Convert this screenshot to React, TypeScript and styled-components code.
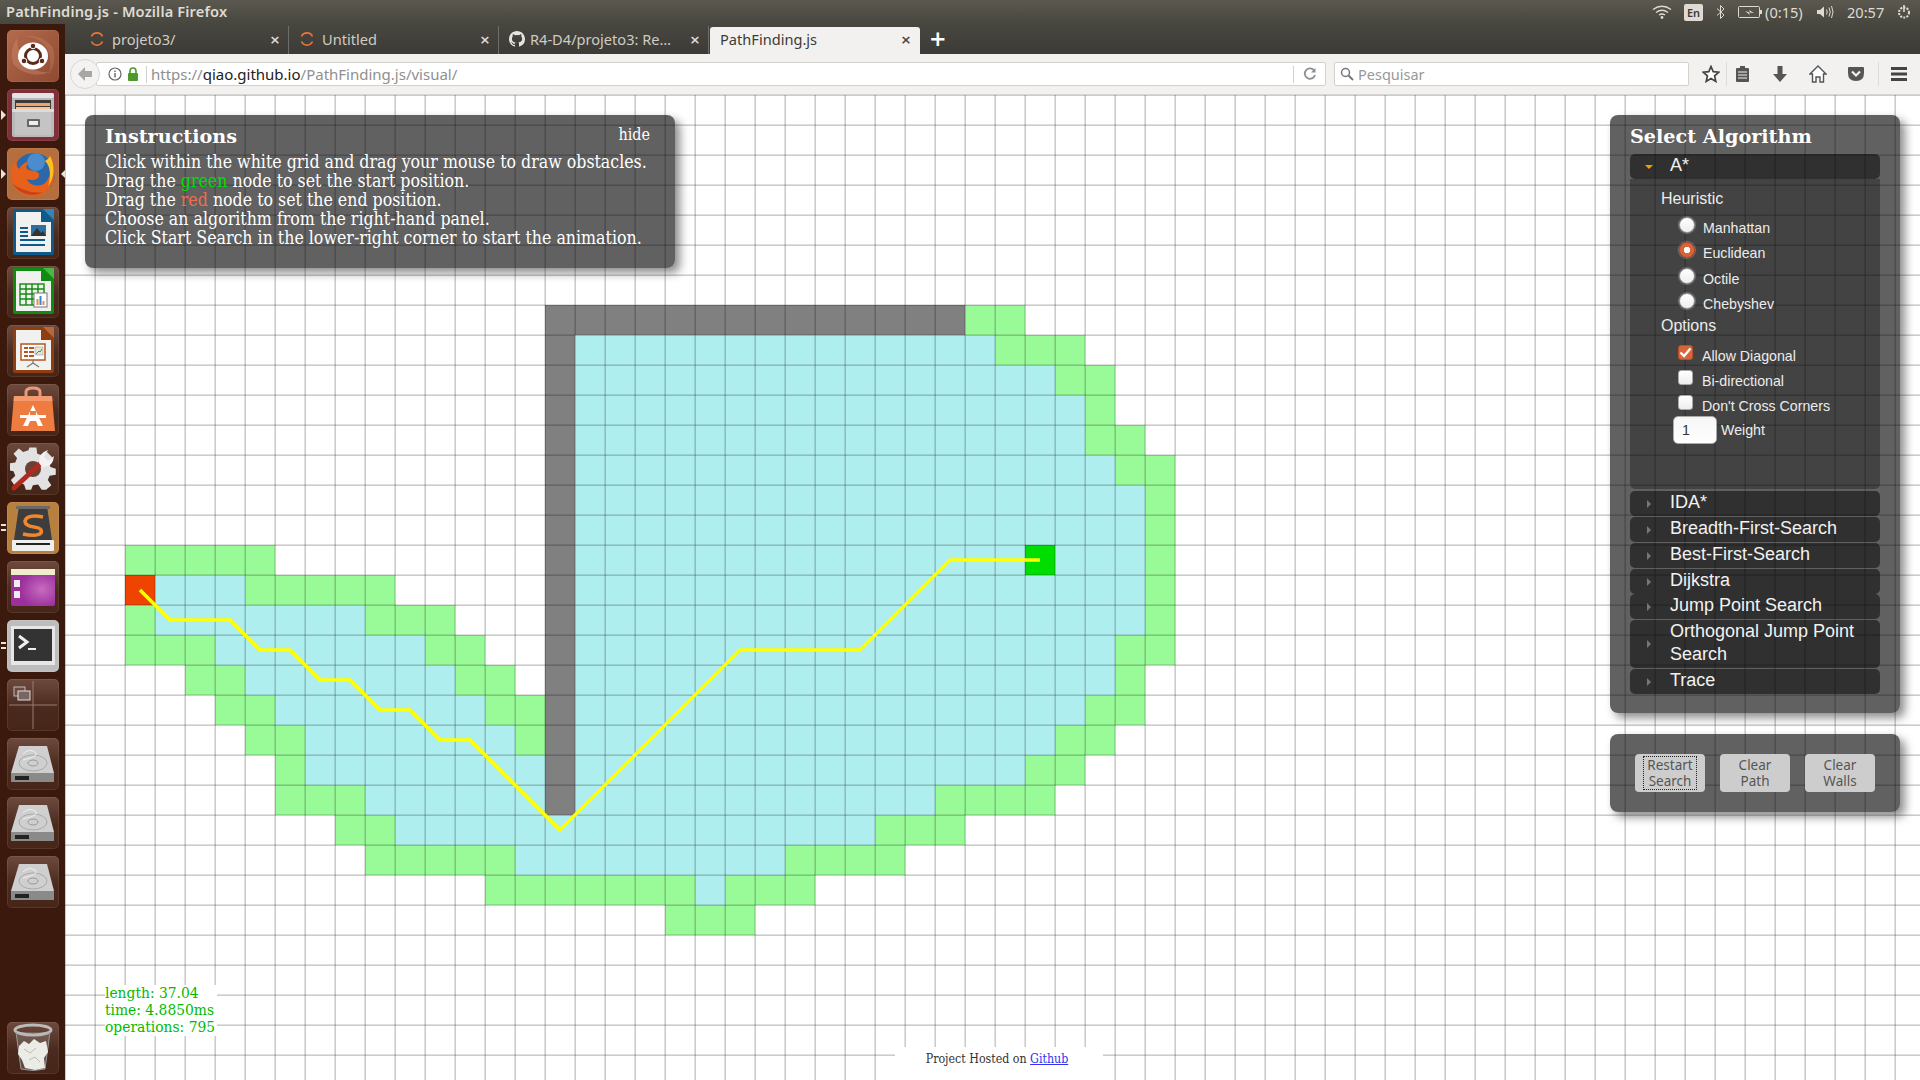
import React from "react";
import styled, { createGlobalStyle } from "styled-components";

const CELL = 30;
const COLS = 62;
const ROWS = 33;

type Run = [number, number, "open" | "closed" | "wall"];

// one entry per grid row: [first col, last col, kind]
const RUNS: Record<number, Run[]> = {
  7: [[16, 29, "wall"], [30, 31, "open"]],
  8: [[16, 16, "wall"], [17, 30, "closed"], [31, 33, "open"]],
  9: [[16, 16, "wall"], [17, 32, "closed"], [33, 34, "open"]],
  10: [[16, 16, "wall"], [17, 33, "closed"], [34, 34, "open"]],
  11: [[16, 16, "wall"], [17, 33, "closed"], [34, 35, "open"]],
  12: [[16, 16, "wall"], [17, 34, "closed"], [35, 36, "open"]],
  13: [[16, 16, "wall"], [17, 35, "closed"], [36, 36, "open"]],
  14: [[16, 16, "wall"], [17, 35, "closed"], [36, 36, "open"]],
  15: [[2, 6, "open"], [16, 16, "wall"], [17, 35, "closed"], [36, 36, "open"]],
  16: [[3, 5, "closed"], [6, 10, "open"], [16, 16, "wall"], [17, 35, "closed"], [36, 36, "open"]],
  17: [[2, 2, "open"], [3, 9, "closed"], [10, 12, "open"], [16, 16, "wall"], [17, 35, "closed"], [36, 36, "open"]],
  18: [[2, 4, "open"], [5, 11, "closed"], [12, 13, "open"], [16, 16, "wall"], [17, 34, "closed"], [35, 36, "open"]],
  19: [[4, 5, "open"], [6, 12, "closed"], [13, 14, "open"], [16, 16, "wall"], [17, 34, "closed"], [35, 35, "open"]],
  20: [[5, 6, "open"], [7, 13, "closed"], [14, 15, "open"], [16, 16, "wall"], [17, 33, "closed"], [34, 35, "open"]],
  21: [[6, 7, "open"], [8, 14, "closed"], [15, 15, "open"], [16, 16, "wall"], [17, 32, "closed"], [33, 34, "open"]],
  22: [[7, 7, "open"], [8, 15, "closed"], [16, 16, "wall"], [17, 31, "closed"], [32, 33, "open"]],
  23: [[7, 9, "open"], [10, 15, "closed"], [16, 16, "wall"], [17, 28, "closed"], [29, 32, "open"]],
  24: [[9, 10, "open"], [11, 26, "closed"], [27, 29, "open"]],
  25: [[10, 14, "open"], [15, 23, "closed"], [24, 27, "open"]],
  26: [[14, 20, "open"], [21, 21, "closed"], [22, 24, "open"]],
  27: [[20, 22, "open"]],
};

const FILL = { open: "#98fb98", closed: "#afeeee", wall: "#808080" };

const PATH = [
  [2, 16], [3, 17], [5, 17], [6, 18], [7, 18], [8, 19], [9, 19], [10, 20], [11, 20],
  [12, 21], [13, 21], [16, 24], [22, 18], [26, 18], [29, 15], [32, 15],
];

const DARK_TILE = "linear-gradient(#6e4a3d, #4a2a1e 55%, #472619)";

const GlobalStyle = createGlobalStyle`
  html, body {
    margin: 0;
    padding: 0;
    overflow: hidden;
    background: #fff;
  }
`;

const Screen = styled.div`
  width: 1920px;
  height: 1080px;
  display: flex;
  flex-direction: column;
  overflow: hidden;
`;

const TitleBar = styled.div`
  height: 24px;
  flex: none;
  display: flex;
  align-items: center;
  padding: 0 8px 0 6px;
  background: linear-gradient(#5b594f, #47463f);
  color: #dfdbd2;
  font: 500 14.6px "Noto Sans", sans-serif;
`;

const WindowTitle = styled.div`
  font-weight: 600;
  letter-spacing: 0.15px;
  margin-right: auto;
  padding-bottom: 2px;
`;

const TrayText = styled.span<{ $ml: number; $w: number }>`
  margin-left: ${({ $ml }) => $ml}px;
  width: ${({ $w }) => $w}px;
  flex: none;
  white-space: nowrap;
  font-size: 14.6px;
  color: #dfdbd2;
  font-weight: 400;
`;

const TrayIcon = styled.svg<{ $ml: number }>`
  margin-left: ${({ $ml }) => $ml}px;
  flex: none;
  display: block;
`;

const LangBox = styled.span`
  margin-left: 12px;
  width: 19px;
  height: 17px;
  flex: none;
  border-radius: 2px;
  background: #dfdbd2;
  color: #3c3b37;
  font-size: 11px;
  font-weight: 600;
  display: flex;
  align-items: center;
  justify-content: center;
`;

const Body = styled.div`
  flex: 1;
  display: flex;
  min-height: 0;
`;

const Launcher = styled.div`
  width: 65px;
  flex: none;
  display: flex;
  flex-direction: column;
  gap: 7px;
  padding: 6px 0;
  box-sizing: border-box;
  background: #3c190d;
  align-items: center;
`;

const Tile = styled.div<{ $bg: string; $bottom?: boolean }>`
  position: relative;
  width: 52px;
  height: 52px;
  flex: none;
  border-radius: 5px;
  background: ${({ $bg }) => $bg};
  box-shadow: inset 0 0 0 1px rgba(255, 255, 255, 0.08);
  ${({ $bottom }) => ($bottom ? "margin-top: auto;" : "")}

  svg {
    display: block;
  }
`;

const Pip = styled.span<{ $side: "left" | "right" }>`
  position: absolute;
  top: 21px;
  ${({ $side }) => ($side === "left" ? "left: -6px;" : "right: -7px;")}
  width: 0;
  height: 0;
  border-top: 5px solid transparent;
  border-bottom: 5px solid transparent;
  ${({ $side }) =>
    $side === "left" ? "border-left: 5px solid #e8e4dc;" : "border-right: 5px solid #e8e4dc;"}
`;

const DoublePip = styled.span`
  position: absolute;
  left: -6px;
  top: 22px;
  width: 5px;
  height: 2px;
  background: #e8e4dc;
  box-shadow: 0 5px 0 #e8e4dc;
`;

const Browser = styled.div`
  flex: 1;
  min-width: 0;
  display: flex;
  flex-direction: column;
`;

const TabStrip = styled.div`
  height: 30px;
  flex: none;
  display: flex;
  align-items: flex-end;
  padding-left: 14px;
  background: linear-gradient(#47463f, #3c3b37);
  font: 14.6px "Noto Sans", sans-serif;
`;

const Tab = styled.div<{ $active?: boolean }>`
  width: 210px;
  height: ${({ $active }) => ($active ? "27px" : "28px")};
  box-sizing: border-box;
  display: flex;
  align-items: center;
  padding: 0 ${({ $active }) => ($active ? "8px 3px" : "7px 2px")} 10px;
  margin-left: ${({ $active }) => ($active ? "1px" : "0")};
  color: ${({ $active }) => ($active ? "#3c3b37" : "#cfccc4")};
  background: ${({ $active }) => ($active ? "#f2f1f0" : "transparent")};
  border-radius: ${({ $active }) => ($active ? "3px 3px 0 0" : "0")};
  border-right: ${({ $active }) => ($active ? "0" : "1px solid #6e6d68")};
`;

const TabLabel = styled.span<{ $gap: number }>`
  margin-left: ${({ $gap }) => $gap}px;
  flex: 1;
  white-space: nowrap;
`;

const TabClose = styled.span<{ $dark?: boolean }>`
  font: 700 13px "DejaVu Sans", sans-serif;
  color: ${({ $dark }) => ($dark ? "#444" : "#ddd")};
  width: 12px;
  text-align: center;
`;

const NewTab = styled.span`
  margin-left: 9px;
  align-self: center;
  color: #fff;
  font: 700 21px "DejaVu Sans", sans-serif;
  line-height: 1;
`;

const Toolbar = styled.div`
  height: 41px;
  flex: none;
  box-sizing: border-box;
  display: flex;
  align-items: center;
  padding-left: 5px;
  background: #f2f1f0;
  border-bottom: 1px solid #d6d5d3;
`;

const BackButton = styled.div`
  position: relative;
  z-index: 1;
  width: 30px;
  height: 30px;
  flex: none;
  box-sizing: border-box;
  margin-right: -4px;
  border-radius: 50%;
  border: 1px solid #d8d7d5;
  background: #f4f3f2;
  display: flex;
  align-items: center;
  justify-content: center;
`;

const UrlBox = styled.div`
  width: 1230px;
  height: 24px;
  flex: none;
  box-sizing: border-box;
  display: flex;
  align-items: center;
  padding-left: 10px;
  background: #fff;
  border: 1px solid #d2d1ce;
  border-radius: 2px;
  font: 15px "Noto Sans", sans-serif;
  color: #8f8f8f;
`;

const UrlDivider = styled.span`
  width: 1px;
  height: 17px;
  margin: 0 4px 0 6px;
  background: #d2d1ce;
`;

const UrlHost = styled.span`
  color: #222;
`;

const ReloadSlot = styled.div`
  margin-left: auto;
  width: 31px;
  height: 17px;
  border-left: 1px solid #d2d1ce;
  display: flex;
  align-items: center;
  justify-content: center;
`;

const SearchBox = styled(UrlBox)`
  width: 355px;
  margin-left: 8px;
  padding-left: 5px;
  gap: 4px;
  font-size: 14.5px;
  color: #999;
`;

const ToolSlot = styled.div<{ $w: number; $rule?: boolean; $ml?: number }>`
  width: ${({ $w }) => $w}px;
  height: 24px;
  flex: none;
  margin-left: ${({ $ml }) => $ml ?? 0}px;
  display: flex;
  align-items: center;
  justify-content: center;
  box-sizing: border-box;
  border-right: ${({ $rule }) => ($rule ? "1px solid #dcdbd9" : "0")};
`;

const LockIcon = styled.svg`
  margin-left: 3px;
`;

const Viewport = styled.div`
  position: relative;
  flex: 1;
  min-height: 0;
  overflow: hidden;
  background: #fff;
`;

const Canvas = styled.svg`
  display: block;
`;

const Panel = styled.div`
  background: rgba(0, 0, 0, 0.62);
  border-radius: 8px;
  box-shadow: 5px 5px 10px rgba(0, 0, 0, 0.45);
  color: #fff;
`;

const InstructionsPanel = styled(Panel)`
  position: absolute;
  left: 20px;
  top: 20px;
  width: 590px;
  height: 153px;
  box-sizing: border-box;
  padding: 9px 20px;
  font: 17.6px "DejaVu Serif Condensed", "DejaVu Serif", serif;
  font-stretch: condensed;
  line-height: 19px;
`;

const PanelHeading = styled.div`
  font: 700 19.2px "DejaVu Serif", serif;
  line-height: 26px;
`;

const InstructionsBody = styled.div`
  margin-top: 3px;
`;

const HideLink = styled.span`
  position: absolute;
  right: 25px;
  top: 10px;
  font-size: 16px;
`;

const Hint = styled.span<{ $color: string }>`
  color: ${({ $color }) => $color};
`;

const SideStack = styled.div`
  position: absolute;
  right: 20px;
  top: 20px;
  width: 290px;
  display: flex;
  flex-direction: column;
  gap: 21px;
`;

const AlgorithmPanel = styled(Panel)`
  height: 598px;
  box-sizing: border-box;
  padding: 9px 20px 0;
  font-family: "Liberation Sans", sans-serif;

  ${PanelHeading} {
    height: 30px;
  }
`;

const AccordionHead = styled.div<{ $tight?: boolean }>`
  min-height: 25px;
  box-sizing: border-box;
  display: flex;
  align-items: center;
  margin-bottom: ${({ $tight }) => ($tight ? "0" : "1px")};
  padding: 0 0 2px 40px;
  position: relative;
  background: rgba(0, 0, 0, 0.5);
  border-radius: 5px;
  font-size: 18px;
  line-height: 23px;
  color: #f2f2f2;
`;

const Caret = styled.span<{ $open?: boolean }>`
  position: absolute;
  top: 50%;
  ${({ $open }) =>
    $open
      ? `left: 15px;
         margin-top: -2px;
         border-left: 4px solid transparent;
         border-right: 4px solid transparent;
         border-top: 4px solid #f90;`
      : `left: 17px;
         margin-top: -4px;
         border-top: 4px solid transparent;
         border-bottom: 4px solid transparent;
         border-left: 4px solid #777;`}
  width: 0;
  height: 0;
`;

const AccordionBody = styled.div`
  height: 310px;
  box-sizing: border-box;
  margin: -1px 0 2px;
  padding-top: 8px;
  background: rgba(0, 0, 0, 0.3);
  border-radius: 0 0 5px 5px;
  font-size: 14.2px;
  color: #ececec;
`;

const GroupLabel = styled.div<{ $h: number }>`
  height: ${({ $h }) => $h}px;
  line-height: ${({ $h }) => $h}px;
  padding-left: 31px;
  font-size: 16px;
`;

const OptionRow = styled.div<{ $h: number; $indent: number; $gap: number }>`
  height: ${({ $h }) => $h}px;
  padding-left: ${({ $indent }) => $indent}px;
  display: flex;
  align-items: center;
  gap: ${({ $gap }) => $gap}px;
`;

const OptionText = styled.span<{ $drop: number }>`
  margin-top: ${({ $drop }) => $drop}px;
`;

const Radio = styled.span<{ $on?: boolean }>`
  width: 16px;
  height: 16px;
  box-sizing: border-box;
  border-radius: 50%;
  border: 1px solid ${({ $on }) => ($on ? "#b8502a" : "#9a9a9a")};
  background: ${({ $on }) =>
    $on
      ? "radial-gradient(circle, #fff 0 3px, #d8653a 3.5px)"
      : "linear-gradient(#fff, #eee)"};
  box-shadow: 0 0 1px 1px rgba(255, 255, 255, 0.25);
`;

const Check = styled.span<{ $on?: boolean }>`
  width: 15px;
  height: 15px;
  box-sizing: border-box;
  border-radius: 3px;
  border: 1px solid ${({ $on }) => ($on ? "#b8502a" : "#aaa")};
  background: ${({ $on }) => ($on ? "#d8653a" : "linear-gradient(#fff, #eee)")};
  display: flex;
  align-items: center;
  justify-content: center;
`;

const SectionGap = styled.div<{ $h: number }>`
  height: ${({ $h }) => $h}px;
`;

const WeightRow = styled.div`
  margin-top: 1px;
  height: 28px;
  padding-left: 43px;
  display: flex;
  align-items: center;
  gap: 4px;
`;

const WeightInput = styled.div`
  width: 44px;
  height: 28px;
  box-sizing: border-box;
  border-radius: 5px;
  border: 1px solid #aaa;
  background: linear-gradient(#f6f6f6, #fff);
  color: #333;
  padding-left: 8px;
  line-height: 26px;
`;

const ActionsPanel = styled(Panel)`
  height: 78px;
  box-sizing: border-box;
  padding: 20px 25px;
  display: flex;
  gap: 15px;
`;

const ActionButton = styled.div<{ $focus?: boolean }>`
  position: relative;
  width: 70px;
  height: 38px;
  border-radius: 4px;
  background: #cdcdcd;
  color: #555;
  font: 13.5px/16px "Noto Sans", sans-serif;
  text-align: center;
  display: flex;
  align-items: center;
  justify-content: center;

  ${({ $focus }) =>
    $focus
      ? `&::after {
           content: "";
           position: absolute;
           left: 8px;
           right: 8px;
           top: 2px;
           bottom: 2px;
           border: 1px dotted #222;
         }`
      : ""}
`;

const Stats = styled.div`
  position: absolute;
  left: 40px;
  bottom: 44px;
  padding-right: 2px;
  background: #fff;
  color: #00bb00;
  font: 15.4px/17px "DejaVu Serif Condensed", "DejaVu Serif", serif;
  font-stretch: condensed;
`;

const Footer = styled.div`
  position: absolute;
  left: 830px;
  bottom: 0;
  width: 208px;
  height: 33px;
  box-sizing: border-box;
  padding: 1px 4px 0 0;
  background: #fff;
  color: #333;
  text-align: center;
  font: 12.3px/22px "DejaVu Serif Condensed", "DejaVu Serif", serif;
  font-stretch: condensed;
`;

const FooterLink = styled.span`
  color: #3333ee;
  text-decoration: underline;
`;

const GridCanvas = () => {
  const cx = (c: number) => c * CELL + 15;
  return (
    <Canvas width={COLS * CELL} height={ROWS * CELL} shapeRendering="crispEdges">
      {Object.entries(RUNS).flatMap(([row, runs]) =>
        runs.map(([from, to, kind]) => (
          <rect
            key={`${row}-${from}`}
            x={from * CELL}
            y={Number(row) * CELL}
            width={(to - from + 1) * CELL}
            height={CELL}
            fill={FILL[kind]}
          />
        )),
      )}
      <rect x={2 * CELL} y={16 * CELL} width={CELL} height={CELL} fill="#ee4400" />
      <rect x={32 * CELL} y={15 * CELL} width={CELL} height={CELL} fill="#00dd00" />
      {Array.from({ length: COLS }, (_, i) => (
        <g key={`v${i}`}>
          <rect x={i * CELL - 1} y={0} width={1} height={ROWS * CELL} fill="rgba(0,0,0,0.12)" />
          <rect x={i * CELL} y={0} width={1} height={ROWS * CELL} fill="rgba(0,0,0,0.2)" />
        </g>
      ))}
      {Array.from({ length: ROWS }, (_, i) => (
        <g key={`h${i}`}>
          <rect x={0} y={i * CELL - 1} width={COLS * CELL} height={1} fill="rgba(0,0,0,0.12)" />
          <rect x={0} y={i * CELL} width={COLS * CELL} height={1} fill="rgba(0,0,0,0.2)" />
        </g>
      ))}
      <polyline
        points={PATH.map(([c, r]) => `${cx(c)},${cx(r)}`).join(" ")}
        fill="none"
        stroke="#ffff00"
        strokeWidth={3.5}
        shapeRendering="auto"
      />
    </Canvas>
  );
};

const Spinner = () => (
  <svg width="16" height="16" viewBox="0 0 16 16">
    <path d="M2.5 5.5A6 6 0 0 1 13.5 5.5" fill="none" stroke="#e8763a" strokeWidth="1.6" />
    <path d="M2.5 10.5A6 6 0 0 0 13.5 10.5" fill="none" stroke="#e8763a" strokeWidth="1.6" />
  </svg>
);

const GithubMark = () => (
  <svg width="16" height="16" viewBox="0 0 16 16">
    <path
      fill="#e6e4de"
      d="M8 0C3.58 0 0 3.58 0 8c0 3.54 2.29 6.53 5.47 7.59.4.07.55-.17.55-.38v-1.34c-2.23.48-2.69-1.07-2.69-1.07-.36-.92-.89-1.17-.89-1.17-.73-.5.05-.49.05-.49.8.06 1.23.82 1.23.82.71 1.22 1.87.87 2.33.66.07-.52.28-.87.51-1.07-1.78-.2-3.64-.89-3.64-3.95 0-.87.31-1.59.82-2.15-.08-.2-.36-1.02.08-2.12 0 0 .67-.22 2.2.82a7.6 7.6 0 0 1 4 0c1.53-1.04 2.2-.82 2.2-.82.44 1.1.16 1.92.08 2.12.51.56.82 1.27.82 2.15 0 3.07-1.87 3.75-3.65 3.95.29.25.54.73.54 1.48v2.2c0 .21.15.46.55.38A8 8 0 0 0 16 8c0-4.42-3.58-8-8-8z"
    />
  </svg>
);

const UbuntuIcon = () => (
  <svg width="52" height="52" viewBox="0 0 52 52">
    <path d="M6 34Q22 50 44 42Q30 44 20 34T10 8Q2 20 6 34z" fill="#c98a6e" opacity=".45" />
    <path d="M46 18Q36 4 16 6Q30 6 38 16T42 44Q50 32 46 18z" fill="#c98a6e" opacity=".35" />
    <ellipse cx="26" cy="26" rx="15" ry="13.5" fill="#fff" />
    <circle cx="26" cy="26" r="7.5" fill="none" stroke="#5a2a1a" strokeWidth="3" />
    <circle cx="26" cy="16" r="2.8" fill="#5a2a1a" stroke="#fff" />
    <circle cx="17" cy="31" r="2.8" fill="#5a2a1a" stroke="#fff" />
    <circle cx="35" cy="31" r="2.8" fill="#5a2a1a" stroke="#fff" />
  </svg>
);

const CabinetIcon = () => (
  <svg width="52" height="52" viewBox="0 0 52 52">
    <rect x="5" y="4" width="42" height="44" rx="2" fill="#b9b9b9" />
    <rect x="5" y="4" width="42" height="5" rx="2" fill="#e4e4e4" />
    <rect x="8" y="11" width="36" height="13" fill="#3a3a3a" />
    <rect x="9" y="14" width="34" height="3" fill="#f0a466" />
    <rect x="9" y="18" width="34" height="3" fill="#f3c89c" />
    <rect x="8" y="22" width="36" height="24" fill="#c4c4c4" />
    <rect x="5" y="20" width="42" height="3" fill="#dcdcdc" />
    <rect x="20" y="30" width="13" height="8" rx="1" fill="#666" />
    <rect x="22" y="32" width="9" height="4" fill="#eee" />
  </svg>
);

const FirefoxIcon = () => (
  <svg width="52" height="52" viewBox="0 0 52 52">
    <circle cx="27" cy="26" r="21" fill="#2c67a8" />
    <circle cx="29" cy="14" r="9" fill="#4a8ccc" />
    <path
      d="M43 8C50 18 50 34 40 43C30 52 12 49 6 36C2 27 4 16 10 12C9 16 10 19 12 21C15 15 22 13 22 13C19 17 18 21 22 22C27 23 33 23 32 28C31 32 24 33 20 31C22 37 31 40 38 35C44 30 45 18 43 8z"
      fill="#e8611a"
    />
    <path d="M43 8C48 17 48 30 41 38C44 30 44 18 38 13C40 12 42 10 43 8z" fill="#fcc022" />
    <path d="M6 36C12 46 26 50 36 44C26 46 14 42 6 36z" fill="#c9401a" />
  </svg>
);

const DocIcon = ({ edge, corner, children }: { edge: string; corner: string; children: React.ReactNode }) => (
  <svg width="52" height="52" viewBox="0 0 52 52">
    <path d="M6 2H36L47 13V46Q47 48 45 48H8Q6 48 6 46z" fill={edge} />
    <path d="M9 5H34V15H44V45H9z" fill="#f1f1ef" />
    <path d="M36 2H47V13z" fill={corner} />
    {children}
  </svg>
);

const WriterIcon = () => (
  <DocIcon edge="#0e5a8a" corner="#2f86bd">
    <g fill="#0e5a8a">
      <rect x="13" y="20" width="8" height="2" />
      <rect x="13" y="24" width="8" height="2" />
      <rect x="13" y="28" width="8" height="2" />
      <rect x="13" y="32" width="25" height="2" />
      <rect x="13" y="37" width="25" height="2" />
    </g>
    <rect x="24" y="18" width="15" height="11" fill="#2f6f9e" />
    <path d="M24 29L30 21L34 26L36 24L39 29z" fill="#333" />
  </DocIcon>
);

const CalcIcon = () => (
  <DocIcon edge="#108a10" corner="#45bb45">
    <g fill="none" stroke="#108a10" strokeWidth="1.4">
      <rect x="13" y="18" width="24" height="21" />
      <path d="M13 23H37M13 28H37M13 33H37M19 18V39M25 18V39M31 18V39" />
    </g>
    <rect x="27" y="27" width="13" height="14" fill="#fff" stroke="#777" />
    <rect x="29.5" y="33" width="2" height="6" fill="#e85" />
    <rect x="32.5" y="30" width="2" height="9" fill="#38c" />
    <rect x="35.5" y="35" width="2" height="4" fill="#e85" />
  </DocIcon>
);

const ImpressIcon = () => (
  <DocIcon edge="#8e3e10" corner="#b9683a">
    <rect x="14" y="19" width="24" height="16" fill="#fff" stroke="#b5561f" strokeWidth="1.5" />
    <g fill="#b5561f">
      <rect x="17" y="22" width="4" height="2" />
      <rect x="17" y="26" width="4" height="2" />
      <rect x="17" y="30" width="4" height="2" />
      <rect x="22" y="22" width="5" height="2" />
      <rect x="22" y="26" width="5" height="2" />
      <rect x="22" y="30" width="5" height="2" />
    </g>
    <rect x="28" y="22" width="8" height="8" fill="#dfe6d4" stroke="#888" strokeWidth=".5" />
    <path d="M29 29L32 26L33 27L35 24" fill="none" stroke="#4a9a3a" />
    <path d="M26 35V39M26 38L20 42M26 38L32 42" stroke="#777" strokeWidth="1.2" fill="none" />
  </DocIcon>
);

const StoreIcon = () => (
  <svg width="52" height="52" viewBox="0 0 52 52">
    <path d="M19 14V8Q19 4 26 4Q33 4 33 8V14" fill="none" stroke="#e89a7c" strokeWidth="3" />
    <path d="M7 12H45L48 47H4z" fill="#ee7b3f" />
    <path d="M7 12H45L45.5 17H6.5z" fill="#f59a6c" />
    <path d="M26 21L36 42H31L29 37H23L21 42H16z" fill="#fff" />
    <rect x="13" y="31" width="26" height="3" fill="#fff" />
    <rect x="23" y="27" width="6" height="4" fill="#ee7b3f" />
  </svg>
);

const SettingsIcon = () => (
  <svg width="52" height="52" viewBox="0 0 52 52">
    <path
      d="M22 4H30L31 11L37 13L42 9L48 15L44 21L46 26L52 28V35L45 36L43 41L47 47L41 52H36L32 46L26 47L24 52H18L16 46L11 44L5 47L1 41L6 36L4 31L0 30V22L6 21L8 16L4 11L10 5L15 9L21 7z"
      fill="#e2e2e2"
      transform="translate(3 1) scale(.88)"
    />
    <circle cx="26" cy="26" r="8" fill="#6a4234" />
    <path d="M7 45L33 21" stroke="#b02a20" strokeWidth="5" strokeLinecap="round" />
    <path d="M32 20Q31 10 41 7L37 14L41 18L47 13Q46 25 35 24z" fill="#f2f2f2" />
  </svg>
);

const SublimeIcon = () => (
  <svg width="52" height="52" viewBox="0 0 52 52">
    <path d="M12 4H40L45 38H7z" fill="#3d3d3d" />
    <rect x="9" y="4" width="34" height="3" rx="1" fill="#6a6a6a" />
    <rect x="5" y="38" width="42" height="11" rx="1" fill="#efefef" />
    <rect x="9" y="41" width="34" height="2" fill="#222" />
    <path d="M36 15Q20 12 18 19Q18 24 27 25Q36 26 34 31Q30 35 16 32" fill="none" stroke="#f0872a" strokeWidth="3.6" />
  </svg>
);

const PurpleIcon = () => (
  <svg width="52" height="52" viewBox="0 0 52 52">
    <defs>
      <radialGradient id="purpleGlow" cx="0.7" cy="0.55" r="0.5">
        <stop offset="0" stopColor="#c76cc0" />
        <stop offset="1" stopColor="#9c2f9c" />
      </radialGradient>
    </defs>
    <rect x="4" y="8" width="44" height="37" rx="2" fill="url(#purpleGlow)" />
    <rect x="4" y="8" width="44" height="6" fill="#efeecb" />
    <rect x="7" y="19" width="6" height="7" fill="#eee" />
    <rect x="7" y="30" width="6" height="7" fill="#eee" />
  </svg>
);

const TerminalIcon = () => (
  <svg width="52" height="52" viewBox="0 0 52 52">
    <rect x="4" y="6" width="44" height="39" fill="#e6e6e6" />
    <rect x="7" y="9" width="38" height="32" fill="#333" />
    <path d="M12 16L20 22L12 28" fill="none" stroke="#eee" strokeWidth="3" />
    <rect x="21" y="28" width="8" height="2" fill="#eee" />
  </svg>
);

const WorkspaceIcon = () => (
  <svg width="52" height="52" viewBox="0 0 52 52">
    <path d="M26 2V50M2 26H50" stroke="#9a7a6e" strokeWidth="1" />
    <rect x="7" y="8" width="11" height="9" fill="#6a4a40" stroke="#bbb" />
    <rect x="11" y="12" width="12" height="9" fill="#7a6660" stroke="#ddd" />
  </svg>
);

const DriveIcon = () => (
  <svg width="52" height="52" viewBox="0 0 52 52">
    <path d="M12 8H40L47 35H4z" fill="#cfcfcf" />
    <rect x="4" y="35" width="43" height="9" fill="#8a8a8a" />
    <rect x="8" y="38" width="14" height="4" fill="#222" />
    <ellipse cx="26" cy="25" rx="14" ry="8" fill="none" stroke="#aaa" />
    <ellipse cx="26" cy="25" rx="5" ry="3" fill="none" stroke="#999" />
    <path d="M16 16Q22 10 28 14T16 22" fill="none" stroke="#eee" />
  </svg>
);

const TrashIcon = () => (
  <svg width="52" height="52" viewBox="0 0 52 52">
    <ellipse cx="26" cy="8" rx="18" ry="5" fill="none" stroke="#bbb" strokeWidth="3" />
    <path d="M9 10L14 47Q26 50 38 47L43 10" fill="rgba(180,180,180,.25)" stroke="#999" />
    <path d="M12 24L17 19L22 22L27 17L33 21L39 19L41 30L37 36L38 46L28 48L18 46L15 38L11 32z" fill="#ecece6" />
    <path d="M17 27L23 31L29 26M22 38L28 35L33 40" fill="none" stroke="#bcbcb4" />
  </svg>
);

const ALGOS = [
  ["IDA*"],
  ["Breadth-First-Search"],
  ["Best-First-Search"],
  ["Dijkstra"],
  ["Jump Point Search"],
  ["Orthogonal Jump Point", "Search"],
  ["Trace"],
];

const Tick = () => (
  <svg width="13" height="11" viewBox="0 0 13 11">
    <path d="M1.5 5.5L5 9L11.5 1.5" fill="none" stroke="#fff" strokeWidth="2.4" />
  </svg>
);

export default function App() {
  return (
    <Screen>
      <GlobalStyle />
      <TitleBar>
        <WindowTitle>PathFinding.js - Mozilla Firefox</WindowTitle>
        <TrayIcon $ml={0} width="20" height="16" viewBox="0 0 20 16">
          <g fill="none" stroke="#dfdbd2" strokeWidth="1.4">
            <path d="M1 5.5Q10 -1 19 5.5" />
            <path d="M4 8.5Q10 4 16 8.5" />
            <path d="M7 11Q10 9 13 11" />
          </g>
          <circle cx="10" cy="13.5" r="1.4" fill="#dfdbd2" />
        </TrayIcon>
        <LangBox>En</LangBox>
        <TrayIcon $ml={13} width="9" height="16" viewBox="0 0 9 16">
          <path d="M1 4.5L8 11L4.5 14.5V1.5L8 5L1 11.5" fill="none" stroke="#dfdbd2" strokeWidth="1" />
        </TrayIcon>
        <TrayIcon $ml={13} width="24" height="14" viewBox="0 0 24 14">
          <rect x=".5" y="1.5" width="21" height="11" rx="1" fill="#55544c" stroke="#dfdbd2" />
          <rect x="22" y="5" width="2" height="4" fill="#dfdbd2" />
          <path d="M7 6L12 7.5L11 5L16 8L11 7.5L12 10z" fill="#dfdbd2" />
        </TrayIcon>
        <TrayText $ml={3} $w={38}>(0:15)</TrayText>
        <TrayIcon $ml={13} width="18" height="14" viewBox="0 0 18 14">
          <path d="M1 5H4L8 1.5V12.5L4 9H1z" fill="#dfdbd2" />
          <path d="M10.5 4.5Q12 7 10.5 9.5M13 2.5Q15.5 7 13 11.5M15.5 1Q18.5 7 15.5 13" fill="none" stroke="#dfdbd2" />
        </TrayIcon>
        <TrayText $ml={13} $w={36}>20:57</TrayText>
        <TrayIcon $ml={13} width="16" height="16" viewBox="0 0 16 16">
          <circle cx="8" cy="8.5" r="5" fill="none" stroke="#dfdbd2" strokeWidth="2" strokeDasharray="2 1.2" />
          <path d="M8 1V8" stroke="#dfdbd2" strokeWidth="1.6" />
        </TrayIcon>
      </TitleBar>

      <Body>
        <Launcher>
          <Tile $bg="linear-gradient(135deg,#b56a4c,#8e4a30)"><UbuntuIcon /></Tile>
          <Tile $bg="#7f3038"><Pip $side="left" /><CabinetIcon /></Tile>
          <Tile $bg="#b56f3e"><Pip $side="left" /><Pip $side="right" /><FirefoxIcon /></Tile>
          <Tile $bg={DARK_TILE}><WriterIcon /></Tile>
          <Tile $bg={DARK_TILE}><CalcIcon /></Tile>
          <Tile $bg={DARK_TILE}><ImpressIcon /></Tile>
          <Tile $bg={DARK_TILE}><StoreIcon /></Tile>
          <Tile $bg={DARK_TILE}><SettingsIcon /></Tile>
          <Tile $bg="#b8803f"><DoublePip /><SublimeIcon /></Tile>
          <Tile $bg={DARK_TILE}><PurpleIcon /></Tile>
          <Tile $bg="#bdbdbd"><DoublePip /><TerminalIcon /></Tile>
          <Tile $bg={DARK_TILE}><WorkspaceIcon /></Tile>
          <Tile $bg={DARK_TILE}><DriveIcon /></Tile>
          <Tile $bg={DARK_TILE}><DriveIcon /></Tile>
          <Tile $bg={DARK_TILE}><DriveIcon /></Tile>
          <Tile $bg={DARK_TILE} $bottom><TrashIcon /></Tile>
        </Launcher>

        <Browser>
          <TabStrip>
            <Tab>
              <Spinner />
              <TabLabel $gap={7}>projeto3/</TabLabel>
              <TabClose>×</TabClose>
            </Tab>
            <Tab>
              <Spinner />
              <TabLabel $gap={7}>Untitled</TabLabel>
              <TabClose>×</TabClose>
            </Tab>
            <Tab>
              <GithubMark />
              <TabLabel $gap={5}>R4-D4/projeto3: Re…</TabLabel>
              <TabClose>×</TabClose>
            </Tab>
            <Tab $active>
              <TabLabel $gap={0}>PathFinding.js</TabLabel>
              <TabClose $dark>×</TabClose>
            </Tab>
            <NewTab>+</NewTab>
          </TabStrip>

          <Toolbar>
            <BackButton>
              <svg width="18" height="18" viewBox="0 0 18 18">
                <path d="M9 2L2 9L9 16V12H16V6H9z" fill="#a6a6a6" />
              </svg>
            </BackButton>
            <UrlBox>
              <svg width="16" height="16" viewBox="0 0 16 16">
                <circle cx="8" cy="8" r="6" fill="none" stroke="#666" strokeWidth="1.2" />
                <rect x="7.3" y="7" width="1.4" height="4.5" fill="#666" />
                <rect x="7.3" y="4.5" width="1.4" height="1.5" fill="#666" />
              </svg>
              <LockIcon width="14" height="16" viewBox="0 0 14 16">
                <rect x="2" y="7" width="10" height="8" rx="1" fill="#4d9a2a" />
                <path d="M4 7V5Q4 2 7 2Q10 2 10 5V7" fill="none" stroke="#4d9a2a" strokeWidth="1.6" />
              </LockIcon>
              <UrlDivider />
              https://<UrlHost>qiao.github.io</UrlHost>/PathFinding.js/visual/
              <ReloadSlot>
                <svg width="14" height="14" viewBox="0 0 14 14">
                  <path d="M11.5 4A5.2 5.2 0 1 0 12 8" fill="none" stroke="#8a8f94" strokeWidth="1.8" />
                  <path d="M12.5 1V5.5H8z" fill="#8a8f94" />
                </svg>
              </ReloadSlot>
            </UrlBox>
            <SearchBox>
              <svg width="14" height="14" viewBox="0 0 14 14">
                <circle cx="5.5" cy="5.5" r="4" fill="none" stroke="#777" strokeWidth="1.5" />
                <path d="M8.5 8.5L13 13" stroke="#777" strokeWidth="2" />
              </svg>
              Pesquisar
            </SearchBox>
            <ToolSlot $w={32} $rule $ml={6}>
              <svg width="18" height="18" viewBox="0 0 18 18">
                <path d="M9 1.5L11.2 6.7L16.8 7.2L12.6 10.9L13.8 16.4L9 13.5L4.2 16.4L5.4 10.9L1.2 7.2L6.8 6.7z" fill="#fff" stroke="#444" strokeWidth="1.7" />
              </svg>
            </ToolSlot>
            <ToolSlot $w={30}>
              <svg width="15" height="18" viewBox="0 0 15 18">
                <rect x="1" y="3" width="13" height="14" rx="1" fill="#555" />
                <rect x="5" y="1" width="5" height="3" fill="#555" />
                <path d="M3 7H12M3 10H12M3 13H12" stroke="#f2f1f0" />
              </svg>
            </ToolSlot>
            <ToolSlot $w={46}>
              <svg width="16" height="18" viewBox="0 0 16 18">
                <path d="M5.5 1H10.5V9H15L8 17L1 9H5.5z" fill="#555" />
              </svg>
            </ToolSlot>
            <ToolSlot $w={30}>
              <svg width="18" height="18" viewBox="0 0 18 18">
                <path d="M9 1L1 9H3.5V17H7V12H11V17H14.5V9H17z" fill="#fff" stroke="#555" strokeWidth="1.4" />
              </svg>
            </ToolSlot>
            <ToolSlot $w={46} $rule>
              <svg width="18" height="16" viewBox="0 0 18 16">
                <path d="M2 1H16Q17 1 17 2V7Q17 15 9 15Q1 15 1 7V2Q1 1 2 1z" fill="#555" />
                <path d="M5 5.5L9 9.5L13 5.5" fill="none" stroke="#f2f1f0" strokeWidth="2.2" />
              </svg>
            </ToolSlot>
            <ToolSlot $w={40}>
              <svg width="18" height="16" viewBox="0 0 18 16">
                <path d="M1 2.5H17M1 8H17M1 13.5H17" stroke="#444" strokeWidth="2.8" />
              </svg>
            </ToolSlot>
          </Toolbar>

          <Viewport>
            <GridCanvas />

            <InstructionsPanel>
              <PanelHeading>Instructions</PanelHeading>
              <HideLink>hide</HideLink>
              <InstructionsBody>
                <div>Click within the white grid and drag your mouse to draw obstacles.</div>
                <div>Drag the <Hint $color="#00dd00">green</Hint> node to set the start position.</div>
                <div>Drag the <Hint $color="#ee6e50">red</Hint> node to set the end position.</div>
                <div>Choose an algorithm from the right-hand panel.</div>
                <div>Click Start Search in the lower-right corner to start the animation.</div>
              </InstructionsBody>
            </InstructionsPanel>

            <SideStack>
              <AlgorithmPanel>
                <PanelHeading>Select Algorithm</PanelHeading>
                <AccordionHead>
                  <Caret $open />A*
                </AccordionHead>
                <AccordionBody>
                  <GroupLabel $h={23}>Heuristic</GroupLabel>
                  <SectionGap $h={2} />
                  {["Manhattan", "Euclidean", "Octile", "Chebyshev"].map((name) => (
                    <OptionRow key={name} $h={25.5} $indent={49} $gap={8}>
                      <Radio $on={name === "Euclidean"} />
                      <OptionText $drop={6}>{name}</OptionText>
                    </OptionRow>
                  ))}
                  <GroupLabel $h={24}>Options</GroupLabel>
                  <SectionGap $h={2} />
                  <OptionRow $h={25} $indent={48} $gap={9}>
                    <Check $on><Tick /></Check>
                    <OptionText $drop={7}>Allow Diagonal</OptionText>
                  </OptionRow>
                  <OptionRow $h={25} $indent={48} $gap={9}>
                    <Check />
                    <OptionText $drop={7}>Bi-directional</OptionText>
                  </OptionRow>
                  <OptionRow $h={25} $indent={48} $gap={9}>
                    <Check />
                    <OptionText $drop={7}>Don't Cross Corners</OptionText>
                  </OptionRow>
                  <WeightRow>
                    <WeightInput>1</WeightInput>
                    <span>Weight</span>
                  </WeightRow>
                </AccordionBody>
                {ALGOS.map((lines) => (
                  <AccordionHead key={lines[0]} $tight={lines[0] === "Dijkstra"}>
                    <Caret />
                    <div>
                      {lines.map((line) => (
                        <div key={line}>{line}</div>
                      ))}
                    </div>
                  </AccordionHead>
                ))}
              </AlgorithmPanel>

              <ActionsPanel>
                <ActionButton $focus>Restart<br />Search</ActionButton>
                <ActionButton>Clear<br />Path</ActionButton>
                <ActionButton>Clear<br />Walls</ActionButton>
              </ActionsPanel>
            </SideStack>

            <Stats>
              <div>length: 37.04</div>
              <div>time: 4.8850ms</div>
              <div>operations: 795</div>
            </Stats>

            <Footer>
              Project Hosted on <FooterLink>Github</FooterLink>
            </Footer>
          </Viewport>
        </Browser>
      </Body>
    </Screen>
  );
}
